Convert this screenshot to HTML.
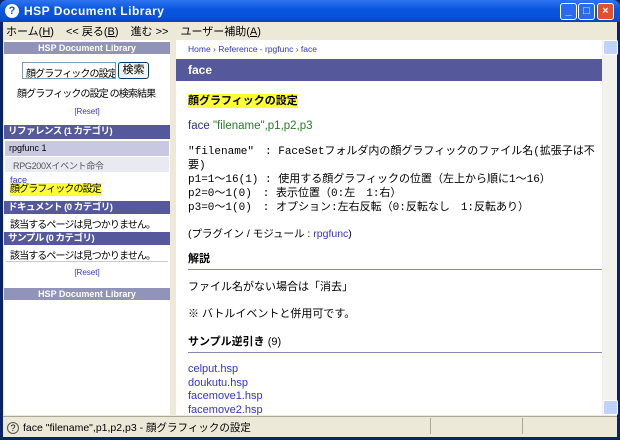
<!DOCTYPE html>
<html><head><meta charset="utf-8"><style>
*{margin:0;padding:0;box-sizing:border-box}
body{width:620px;height:440px;overflow:hidden;background:#0a246a;font-family:"Liberation Sans","Noto Sans CJK JP",sans-serif;font-size:12px;position:relative}
.abs{position:absolute;white-space:nowrap}
#title{left:0;top:0;width:620px;height:22px;background:linear-gradient(#2f74f0,#0a57e0 40%,#0651d8 80%,#0843b8);border-radius:7px 7px 0 0}
#title .t{left:24px;top:4px;color:#fff;font-weight:bold;font-size:12px;letter-spacing:.5px}
.ic{left:5px;top:4px;width:14px;height:14px;border-radius:7px;background:#fff;color:#0a57e0;font-size:11px;font-weight:bold;text-align:center;line-height:14px}
.wb{top:3px;width:17px;height:17px;border:1px solid #fff;border-radius:3px;background:#2a6af0;color:#fff;font-size:11px;text-align:center;line-height:15px;font-weight:bold}
#frame{left:3px;top:22px;width:614px;height:415px;background:#ece9d8}
#menu{left:6px;top:23px;height:16px;font-size:11px;color:#000}
#menu span{margin-right:12px}
#left{left:4px;top:40px;width:166px;height:375px;background:#fff}
#right{left:176px;top:40px;width:426px;height:375px;background:#fff;overflow:hidden}
#sb{left:602px;top:40px;width:15px;height:375px;background:#f3f1ec;border-left:1px solid #eee}
.bar{position:absolute;left:0;width:166px;color:#fff;font-weight:bold;font-size:9.5px;padding-left:4px;white-space:nowrap;letter-spacing:-.5px}
.hdr{background:#9293b8;text-align:center;padding:0;font-size:9px;letter-spacing:0}
.dk{background:#55589a}
.hl{background:#ffff33}
.lnk{color:#3333cc}
.sm{font-size:10px;letter-spacing:-.9px}
.code{font-family:"Liberation Mono","Noto Sans CJK JP",monospace;font-size:11px;color:#000;line-height:14px;white-space:normal}
.sec{position:absolute;left:12px;width:414px;font-weight:bold;font-size:11px;border-bottom:1px solid #8889b0;padding-bottom:3px}
</style></head><body>
<div id="title" class="abs"><div class="ic abs">?</div><div class="t abs">HSP Document Library</div>
<div class="wb abs" style="left:560px">_</div><div class="wb abs" style="left:578px">□</div><div class="wb abs" style="left:597px;background:#e0502a">×</div></div>
<div id="frame" class="abs"></div>
<div id="menu" class="abs"><span>ホーム(<u>H</u>)</span><span>&lt;&lt; 戻る(<u>B</u>)</span><span>進む &gt;&gt;</span><span>ユーザー補助(<u>A</u>)</span></div>
<div id="left" class="abs">
<div class="bar hdr" style="top:2px;height:12px;line-height:12px">HSP Document Library</div>
<div class="abs sm" style="left:18px;top:22px;width:94px;height:17px;border:1px solid #7f9db9;padding:2px 3px;overflow:hidden">顔グラフィックの設定</div>
<div class="abs" style="left:114px;top:22px;width:31px;height:17px;border:1px solid #003c74;border-radius:3px;background:#f4f4ef;font-size:11px;text-align:center;line-height:15px">検索</div>
<div class="abs sm" style="left:13px;top:45px">顔グラフィックの設定 の検索結果</div>
<div class="abs lnk" style="left:0;width:166px;text-align:center;top:67px;font-size:8px">[Reset]</div>
<div class="bar dk" style="top:85px;height:14px;line-height:14px">リファレンス (1 カテゴリ)</div>
<div class="abs" style="left:1px;top:101px;width:164px;height:15px;background:#c8c9e0;font-size:9px;padding:2px 4px">rpgfunc 1</div>
<div class="abs" style="left:1px;top:117px;width:164px;height:15px;background:#e9e9f1;font-size:9px;padding:2px 8px;color:#555;letter-spacing:-.3px">RPG200Xイベント命令</div>
<div class="abs lnk" style="left:6px;top:135px;font-size:9px;text-decoration:underline">face</div>
<div class="abs hl sm" style="left:6px;top:143px;line-height:13px">顔グラフィックの設定</div>
<div class="bar dk" style="top:161px;height:13px;line-height:13px">ドキュメント (0 カテゴリ)</div>
<div class="abs sm" style="left:6px;top:176px">該当するページは見つかりません。</div>
<div class="bar dk" style="top:192px;height:13px;line-height:13px">サンプル (0 カテゴリ)</div>
<div class="abs sm" style="left:6px;top:207px">該当するページは見つかりません。</div>
<div class="abs" style="left:2px;top:221px;width:162px;border-top:1px solid #ccc"></div>
<div class="abs lnk" style="left:0;width:166px;text-align:center;top:228px;font-size:8px">[Reset]</div>
<div class="bar hdr" style="top:248px;height:12px;line-height:12px">HSP Document Library</div>
</div>
<div id="right" class="abs">
<div class="abs lnk" style="left:12px;top:4px;font-size:8.5px">Home › Reference - rpgfunc › face</div>
<div class="abs" style="left:0;top:19px;width:426px;height:22px;background:#55589a;color:#fff;font-weight:bold;font-size:12px;padding:4px 12px">face</div>
<div class="abs hl" style="left:12px;top:54px;font-weight:bold;font-size:11px;line-height:14px">顔グラフィックの設定</div>
<div class="abs" style="left:12px;top:80px;font-size:11.5px"><span style="color:#2d2d9a">face</span> <span style="color:#2a7a2a">"filename",p1,p2,p3</span></div>
<div class="abs code" style="left:12px;top:105px;width:410px">"filename"　: FaceSetフォルダ内の顔グラフィックのファイル名(拡張子は不要)<br>p1=1～16(1) : 使用する顔グラフィックの位置（左上から順に1～16）<br>p2=0～1(0)　: 表示位置（0:左　1:右）<br>p3=0～1(0)　: オプション:左右反転（0:反転なし　1:反転あり）</div>
<div class="abs" style="left:12px;top:186px;font-size:10.5px">(プラグイン / モジュール : <span class="lnk">rpgfunc</span>)</div>
<div class="sec" style="top:210px">解説</div>
<div class="abs" style="left:12px;top:238px;font-size:11px">ファイル名がない場合は「消去」</div>
<div class="abs" style="left:12px;top:265px;font-size:11px">※ バトルイベントと併用可です。</div>
<div class="sec" style="top:293px">サンプル逆引き <span style="font-weight:normal">(9)</span></div>
<div class="abs lnk" style="left:12px;top:323px;font-size:11px;line-height:13.5px">celput.hsp<br>doukutu.hsp<br>facemove1.hsp<br>facemove2.hsp</div>
</div>
<div id="sb" class="abs"><div class="abs" style="left:0;top:0;width:15px;height:15px;background:#c1d3fb;border:1px solid #fff;border-radius:2px"></div><div class="abs" style="left:0;top:360px;width:15px;height:15px;background:#c1d3fb;border:1px solid #fff;border-radius:2px"></div></div>
<div class="abs" style="left:3px;top:416px;width:614px;height:20px;background:#ece9d8;border-top:1px solid #aca899;font-size:10.5px;padding:3px 4px"><span style="display:inline-block;width:12px;height:12px;border-radius:6px;border:1px solid #555;font-size:9px;text-align:center;line-height:11px;margin-right:4px">?</span>face "filename",p1,p2,p3 - 顔グラフィックの設定</div>
<div class="abs" style="left:430px;top:418px;height:16px;border-left:1px solid #aca899"></div>
<div class="abs" style="left:522px;top:418px;height:16px;border-left:1px solid #aca899"></div>
</body></html>
